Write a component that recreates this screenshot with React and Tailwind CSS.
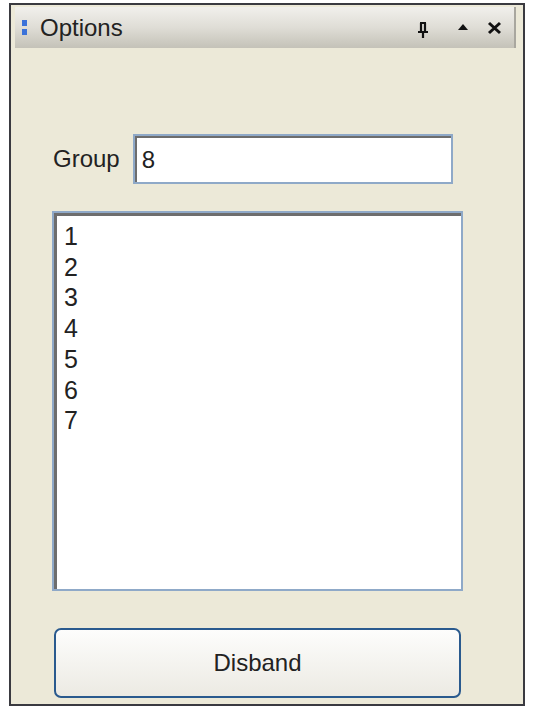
import React from "react";

const font = { fontFamily: '"Liberation Sans", Arial, sans-serif' };

const PinIcon = () => (
  <svg width="14" height="18" viewBox="0 0 14 18">
    <path d="M4 2 H10 M5 2 V11 M9 2 V11 M2 11 H12 M7 11 V17" stroke="#111" strokeWidth="2.2" fill="none" />
  </svg>
);

const UpIcon = () => (
  <svg width="12" height="8" viewBox="0 0 12 8">
    <path d="M1 7 L6 1 L11 7 Z" fill="#111" />
  </svg>
);

const CloseIcon = () => (
  <svg width="15" height="14" viewBox="0 0 15 14">
    <path d="M2 2 L13 12 M13 2 L2 12" stroke="#111" strokeWidth="3" />
  </svg>
);

export default function App() {
  const items = ["1", "2", "3", "4", "5", "6", "7"];

  return (
    <div className="w-[534px] h-[718px] bg-white pl-[9px] pt-[3px]" style={font}>
      <div className="w-[516px] h-[703px] border-2 border-[#3a3a40] bg-[#ece9d8] flex flex-col">
        {/* title bar */}
        <div className="ml-[4px] mt-[2px] w-[501px] h-[41px] flex items-center bg-gradient-to-b from-[#f1f0ec] via-[#dfddd6] to-[#c4c2b8] border-r-2 border-[#a9a79f]">
          <div className="ml-[7px] flex flex-col gap-[3px]">
            <div className="w-[5px] h-[6px] bg-[#3b72d9]" />
            <div className="w-[5px] h-[6px] bg-[#3b72d9]" />
          </div>
          <span className="ml-[13px] text-[24px] leading-none text-[#222]">Options</span>
          <div className="ml-auto flex items-center mr-[12px]">
            <span className="mt-[4px]"><PinIcon /></span>
            <span className="ml-[27px] mb-[2px]"><UpIcon /></span>
            <span className="ml-[18px]"><CloseIcon /></span>
          </div>
        </div>

        {/* group row */}
        <div className="flex items-center mt-[86px] ml-[42px]">
          <span className="text-[24px] leading-none text-[#222]">Group</span>
          <div className="ml-[13px] w-[320px] h-[50px] border-2 border-[#8fa9c8] bg-white">
            <div className="w-full h-full border-t-2 border-l-2 border-[#6d6d6d] flex items-center pl-[5px]">
              <span className="text-[24px] leading-none text-[#222]">8</span>
            </div>
          </div>
        </div>

        {/* list */}
        <div className="ml-[41px] mt-[27px] w-[411px] h-[380px] border-2 border-[#8fa9c8] bg-white">
          <div className="w-full h-full border-t-[3px] border-l-[3px] border-[#6d6d6d] pl-[7px] pt-[5px] flex flex-col">
            {items.map((n) => (
              <div key={n} className="text-[25px] leading-[30.7px] text-[#222]">
                {n}
              </div>
            ))}
          </div>
        </div>

        {/* button */}
        <button className="ml-[43px] mt-[37px] w-[407px] h-[70px] rounded-[7px] border-2 border-[#2a5a8e] bg-gradient-to-b from-[#fdfdfc] to-[#eceae3] text-[24px] text-[#222] flex items-center justify-center">
          Disband
        </button>
      </div>
    </div>
  );
}
